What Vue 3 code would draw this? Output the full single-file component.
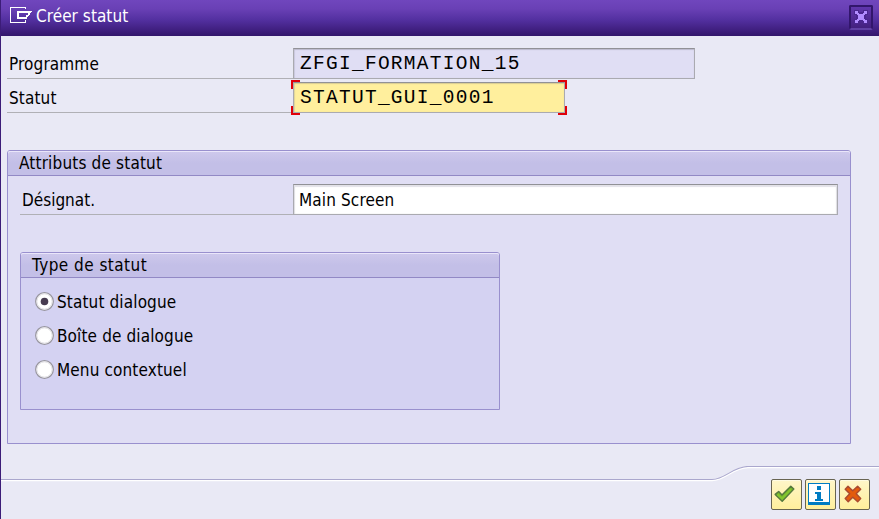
<script setup>
import { ref } from 'vue'

const programme = ref('ZFGI_FORMATION_15')
const statut = ref('STATUT_GUI_0001')
const designation = ref('Main Screen')
const selected = ref('dialogue')
const types = [
  { id: 'dialogue', label: 'Statut dialogue' },
  { id: 'boite', label: 'Boîte de dialogue' },
  { id: 'menu', label: 'Menu contextuel' },
]
</script>

<template>
  <div class="window">
    <header class="titlebar">
      <svg class="title-icon" width="23" height="17" viewBox="0 0 23 17" fill="none" shape-rendering="crispEdges">
        <path d="M15.5 2V.5H.5v15h15V13" stroke="#fff" />
        <path d="M7 4h15v1h-1v1h-1v2h-1v1h-1v1h-1v2H7zM9 6v4h7V8h2V6z" fill="#fff" fill-rule="evenodd" />
      </svg>
      <h1>Créer statut</h1>
      <button class="close" aria-label="Fermer">
        <svg width="14" height="14" viewBox="0 0 14 14" shape-rendering="crispEdges">
          <path d="M0 0h5v2h4V0h5v5h-2v4h2v5H9v-2H5v2H0V9h2V5H0z" fill="#4a2690" />
          <path d="M1 1h3v2h1v1h4V3h1V1h3v3h-2v1h-1v4h1v1h2v3h-3v-2H9v-1H5v1H4v2H1v-3h2V9h1V5H3V4H1z" fill="#b18cff" />
        </svg>
      </button>
    </header>

    <main class="content">
      <div class="row">
        <label class="label">Programme</label>
        <div class="field mono readonly">{{ programme }}</div>
      </div>
      <div class="row">
        <label class="label">Statut</label>
        <div class="field mono focus">
          {{ statut }}
          <i class="corner tl"></i><i class="corner tr"></i><i class="corner bl"></i><i class="corner br"></i>
        </div>
      </div>

      <section class="group outer">
        <h2>Attributs de statut</h2>
        <div class="row attr">
          <label class="label">Désignat.</label>
          <div class="field wide">{{ designation }}</div>
        </div>
        <section class="group inner">
          <h2>Type de statut</h2>
          <div class="radios">
            <div v-for="t in types" :key="t.id" class="option" @click="selected = t.id">
              <svg width="20" height="20" viewBox="0 0 20 20">
                <circle cx="9.5" cy="9.5" r="8.8" fill="#fff" stroke="#98969f" stroke-width="1.3" />
                <circle cx="9.5" cy="9.5" r="7.7" fill="none" stroke="#dedde2" />
                <circle v-if="selected === t.id" cx="9.5" cy="9.5" r="3.8" fill="#473b50" />
              </svg>
              <span>{{ t.label }}</span>
            </div>
          </div>
        </section>
      </section>
    </main>

    <footer class="footer">
      <svg class="divider" width="878" height="16" viewBox="0 0 878 16" fill="none">
        <path d="M0 14.5H711C724 14.5 732 1.5 747 1.5H878" stroke="#fff" stroke-width="1.4" />
        <path d="M0 13.5H711C724 13.5 732 .5 747 .5H878" stroke="#aaa7cd" stroke-width="1.1" />
      </svg>
      <div class="actions">
        <button class="action" aria-label="Valider">
          <svg width="21" height="18" viewBox="0 0 21 18">
            <path d="M1.2 9.4 4.7 6.5 8 10 16.8 1.2 19.8 4 8.2 16.2z" fill="#76b82a" stroke="#56793d" stroke-width="1.5" stroke-linejoin="round" />
            <path d="m3.5 9.5 4.6 4L17 4.3" fill="none" stroke="#84c52f" stroke-width="2" />
          </svg>
        </button>
        <button class="action" aria-label="Informations">
          <svg width="22" height="22" viewBox="0 0 22 22" shape-rendering="crispEdges">
            <path d="M0 0h22v22H0z" fill="#007cc3" />
            <path d="M1 1h20v18H1z" fill="#fff" />
            <path d="M9 3h4v4H9zM7 9h6v7h2v2H7v-2h2v-5H7z" fill="#007cc3" />
          </svg>
        </button>
        <button class="action" aria-label="Annuler">
          <svg width="18" height="18" viewBox="0 0 18 18">
            <path d="M4 1.2 8.7 5.7 13.6 1.2 16.7 4.2 12.2 8.8 16.7 13.6 13.7 16.7 8.8 12.2 4.2 16.7 1.2 13.6 5.7 8.8 1.2 4.2z" fill="#e35b0d" stroke="#aa4a30" stroke-width="1.4" stroke-linejoin="round" />
          </svg>
        </button>
      </div>
    </footer>
  </div>
</template>

<style>
body { margin: 0; overflow: hidden; }
</style>

<style scoped>
* { box-sizing: border-box; }
.window {
  width: 879px;
  height: 519px;
  display: flex;
  flex-direction: column;
  border-left: 1px solid #3c1c78;
  background: #e9e9f5;
  color: #000;
  font: 17px/20px "DejaVu Sans Condensed", "DejaVu Sans", sans-serif;
  letter-spacing: .13px;
}
.titlebar {
  height: 36px;
  flex: none;
  display: flex;
  align-items: center;
  padding: 0 6px 0 9px;
  background: linear-gradient(#7046bd 0, #6940b5 25%, #5330a0 55%, #3e1e7d 85%, #33166b 100%);
}
.title-icon { flex: none; margin-top: -5px; }
h1, h2 { margin: 0; font: inherit; white-space: nowrap; }
h1 { margin: -4px 0 0 3px; color: #fff; letter-spacing: .05px; }
.close {
  width: 24px;
  height: 25px;
  margin: -1px 0 0 auto;
  padding: 0;
  display: grid;
  place-items: center;
  border: 2px solid #32166c;
  border-bottom-color: #6040a5;
  border-radius: 2px;
  background: linear-gradient(#6036ad, #43207f);
}
.close svg { display: block; margin-top: -1px; }
.content { height: 430px; padding: 12px 0 0 6px; }
.row { display: flex; height: 31px; margin-bottom: 3px; }
.label {
  width: 286px;
  height: 31px;
  padding: 6px 0 0 2px;
  border-bottom: 1px solid #b0b0b5;
}
.field {
  position: relative;
  height: 31px;
  padding: 5px 6px 0 5px;
  border: 1px solid #aaaab0;
  border-top-color: #919196;
  background: #fff;
  box-shadow: inset 0 2px 1px #e3e2e8, inset 1px 0 1px #dcdce2, inset -1px 0 1px #dcdce2;
  white-space: nowrap;
}
.mono {
  padding-left: 6px;
  padding-top: 5px;
  font-family: "Courier New", "Liberation Mono", monospace;
  font-size: 19.5px;
  letter-spacing: 1.28px;
}
.readonly { width: 402px; background: #e0def4; box-shadow: inset 0 1px 1px #bbb9cc, inset 1px 0 1px #ccc9df; }
.focus { width: 272px; background: #ffef9d; box-shadow: inset 0 1px 1px #d8cc94, inset 1px 0 1px #e0d49a; }
.corner { position: absolute; width: 9px; height: 9px; border: 0 solid #e00009; }
.tl { left: -3px; top: -3px; border-width: 2px 0 0 2px; }
.tr { right: -3px; top: -3px; border-width: 2px 2px 0 0; }
.bl { left: -3px; bottom: -3px; border-width: 0 0 2px 2px; }
.br { right: -3px; bottom: -3px; border-width: 0 2px 2px 0; }
.group { border: 1px solid #9990ce; border-radius: 3px 3px 0 0; }
.outer { width: 844px; height: 294px; margin-top: 37px; background: #e0def4; }
h2 {
  height: 25px;
  padding: 2px 11px 0;
  border-bottom: 1px solid #9289c5;
  border-radius: 2px 2px 0 0;
  background: linear-gradient(#cec9ec, #c3bfe7 50%, #c3bfe7);
  box-shadow: inset 0 1px #eae6fa;
  letter-spacing: .17px;
}
.inner h2 { letter-spacing: .46px; }
.attr { margin: 8px 0 0 12px; }
.attr .label { width: 273px; letter-spacing: 0; }
.wide { width: 545px; }
.inner { width: 480px; height: 158px; margin: 37px 0 0 12px; background: #d4d2f2; }
.radios { display: flex; flex-direction: column; gap: 14px; padding: 14px 0 0 14px; }
.option { display: flex; align-items: center; height: 20px; gap: 2px; }
.option svg { flex: none; }
.footer { height: 53px; display: flex; flex-direction: column; }
.divider { flex: none; display: block; }
.actions { display: flex; justify-content: flex-end; gap: 3px; padding-right: 9px; margin-top: -3px; }
.action {
  width: 31px;
  height: 31px;
  padding: 0;
  display: grid;
  place-items: center;
  border: 1px solid #686451;
  border-radius: 2px;
  background: linear-gradient(#fff6c9, #ffef9c);
  box-shadow: inset 0 1px #fffbe2;
}
.action svg { margin-top: -2px; margin-left: -4px; }
</style>
